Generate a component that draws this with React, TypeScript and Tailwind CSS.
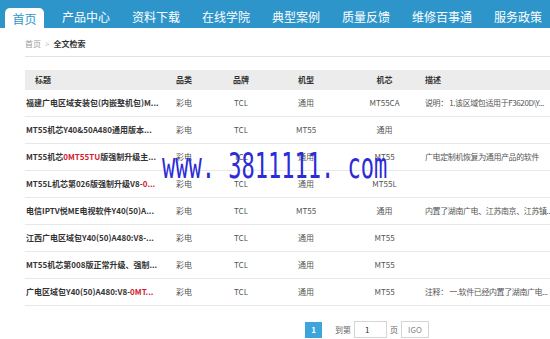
import React from 'react'

const navItems = ['产品中心', '资料下载', '在线学院', '典型案例', '质量反馈', '维修百事通', '服务政策']

interface Row {
  title: React.ReactNode
  model: string
  chip: string
  desc: string
}

const Red = ({ children }: { children: React.ReactNode }) => (
  <span className="text-[#d0202a]">{children}</span>
)

const rows: Row[] = [
  { title: '福建广电区域安装包(内嵌整机包)M...', model: '通用', chip: 'MT55CA', desc: '说明： 1.该区域包适用于F3620D\\Y...' },
  { title: 'MT55机芯Y40&50A480通用版本...', model: 'MT55', chip: '通用', desc: '' },
  {
    title: (
      <>
        MT55机芯<Red>0MT55TU</Red>版强制升级主...
      </>
    ),
    model: '通用',
    chip: 'MT55',
    desc: '广电定制机恢复为通用产品的软件',
  },
  {
    title: (
      <>
        MT55L机芯第026版强制升级V8-<Red>0...</Red>
      </>
    ),
    model: '通用',
    chip: 'MT55L',
    desc: '',
  },
  { title: '电信IPTV悦ME电视软件Y40(50)A...', model: 'MT55', chip: '通用', desc: '内置了湖南广电、江苏南京、江苏镇...' },
  { title: '江西广电区域包Y40(50)A480:V8-...', model: '通用', chip: 'MT55', desc: '' },
  { title: 'MT55机芯第008版正常升级、强制...', model: '通用', chip: 'MT55', desc: '' },
  {
    title: (
      <>
        广电区域包Y40(50)A480:V8-<Red>0MT...</Red>
      </>
    ),
    model: '通用',
    chip: 'MT55',
    desc: '注释： 一.软件已经内置了湖南广电...',
  },
]

const cols = 'grid grid-cols-[137px_44px_70px_60px_89px_1fr] items-center'

export default function App() {
  return (
    <div className="relative w-[550px] h-[339px] overflow-hidden bg-white font-['Noto_Sans_CJK_SC','Noto_Sans',sans-serif] text-[8px] text-[#555]">
      {/* Top nav */}
      <div className="flex h-[28px] items-end bg-[#2d95ca]">
        <div className="ml-[5px] h-[20px] w-[39px] shrink-0 rounded-t-[5px] bg-white text-center text-[12px] leading-[21px] text-[#2d95ca]">
          首页
        </div>
        <div className="ml-[7px] flex shrink-0">
          {navItems.map((item) => (
            <div key={item} className="h-[22px] shrink-0 whitespace-nowrap px-[11px] text-[12px] leading-[21px] text-white">
              {item}
            </div>
          ))}
        </div>
      </div>

      {/* Breadcrumb */}
      <div className="ml-[25px] mt-[10px] flex h-[19px] items-start gap-[4px] border-b border-[#e2e2e2] leading-[11px]">
        <span className="text-[#999]">首页</span>
        <span className="text-[#bbb]">&gt;</span>
        <span className="font-bold text-[#333]">全文检索</span>
      </div>

      {/* Table */}
      <div className="ml-[25px] mt-[13px]">
        <div className={`${cols} h-[20px] bg-[#ececec] font-bold text-[#333]`}>
          <div className="pl-[10px]">标题</div>
          <div className="text-center">品类</div>
          <div className="text-center">品牌</div>
          <div className="text-center">机型</div>
          <div className="pl-[8px] text-center">机芯</div>
          <div>描述</div>
        </div>
        {rows.map((row, i) => (
          <div key={i} className={`${cols} h-[27px] border-b border-[#e8e8e8]`}>
            <div className="whitespace-nowrap pl-[1px] font-bold text-[#333]">{row.title}</div>
            <div className="text-center">彩电</div>
            <div className="text-center">TCL</div>
            <div className="text-center">{row.model}</div>
            <div className="pl-[8px] text-center">{row.chip}</div>
            <div className="whitespace-nowrap tracking-[-0.4px]">{row.desc}</div>
          </div>
        ))}
      </div>

      {/* Pagination */}
      <div className="ml-[305px] mt-[15px] flex items-center text-[#666]">
        <div className="flex h-[16px] w-[17px] items-center justify-center bg-[#3ea4dc] font-bold text-white">1</div>
        <span className="ml-[13px]">到第</span>
        <div className="ml-[3px] h-[17px] w-[33px] border border-[#d5d5d5] pl-[10px] leading-[15px] text-[#333]">1</div>
        <span className="ml-[3px]">页</span>
        <div className="ml-[3px] h-[17px] w-[28px] border border-[#d5d5d5] text-center leading-[15px] text-[#888]">IGO</div>
      </div>

      {/* Watermark */}
      <div className="pointer-events-none absolute left-[162px] top-[146px] origin-top scale-y-[1.6] whitespace-pre font-['DejaVu_Sans_Mono',monospace] text-[22px] leading-[26px] text-[#2b2bd8]">
        www. 3811111. com
      </div>
    </div>
  )
}
